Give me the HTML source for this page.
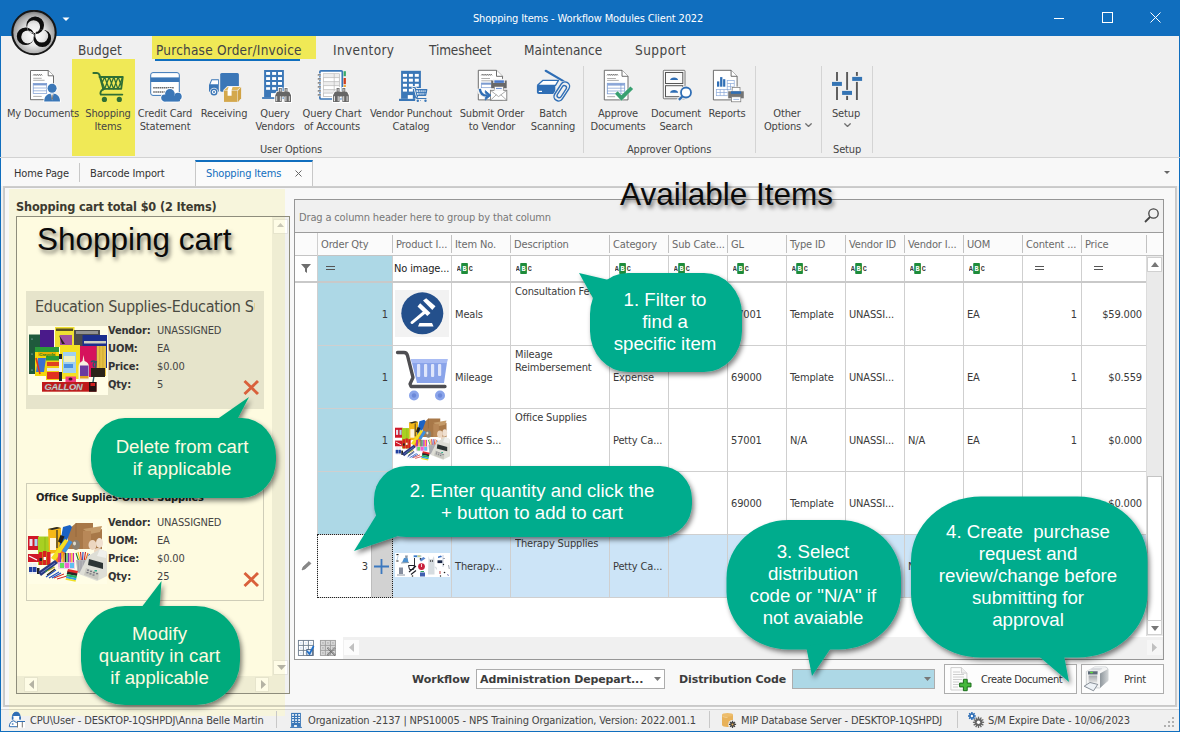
<!DOCTYPE html>
<html lang="en">
<head>
<meta charset="utf-8">
<title>Shopping Items - Workflow Modules Client 2022</title>
<style>
*{box-sizing:border-box;margin:0;padding:0}
html,body{width:1180px;height:732px;overflow:hidden;background:#f0f0f0}
body{font-family:"DejaVu Sans Condensed","Liberation Sans",sans-serif;font-size:11px;color:#444;position:relative;letter-spacing:-0.15px}
.abs{position:absolute}
#win{position:absolute;left:0;top:0;width:1180px;height:732px;background:#f0f0f0;overflow:hidden}
.wb{position:absolute;background:#106ebe}
#titlebar{position:absolute;left:0;top:0;width:1180px;height:36px;background:#106ebe}
#title{position:absolute;left:0;top:12px;width:1176px;text-align:center;color:#fff;font-size:11px}
.rt{position:absolute;top:42px;font-size:13.500px;color:#444;white-space:nowrap;letter-spacing:0}
.ri{position:absolute;top:107px;font-size:11px;line-height:13px;text-align:center;white-space:nowrap;color:#444;transform:translateX(-50%)}
.ric{position:absolute;top:69px;width:34px;height:34px;transform:translateX(-50%)}
.rg{position:absolute;top:143px;font-size:11px;color:#444;white-space:nowrap}
.rsep{position:absolute;top:66px;width:1px;height:87px;background:#d4d4d4}
#ribbonline{position:absolute;left:0;top:157px;width:1180px;height:1px;background:#d2d2d2}
#tabstrip{position:absolute;left:1px;top:158px;width:1178px;height:28px;background:#f8f8f8}
.dt{position:absolute;top:167px;font-size:11px;color:#333;white-space:nowrap}

.tb{font-family:"DejaVu Sans Condensed","Liberation Sans",sans-serif;font-weight:bold}
.big{position:absolute;letter-spacing:0;font-family:"Liberation Sans",sans-serif;color:#0a0a0a;white-space:nowrap;transform-origin:0 0;text-shadow:2px 3px 4px rgba(0,0,0,.55)}
.card{position:absolute;left:26px;width:238px}
.cl{position:absolute;left:108px;font-size:11px;color:#333;white-space:nowrap}
.cv{position:absolute;left:157px;font-size:11px;color:#444;white-space:nowrap}
.sbb{position:absolute;width:14px;height:15px;background:#fefce6;border:1px solid #e6e4cc}

#grid{position:absolute;left:294px;top:199px;width:870px;height:461px;border:1px solid #969696;background:#fff}
.vl{position:absolute;width:1px;background:#cfcfcf}
.hl{position:absolute;height:1px;background:#cfcfcf;left:295px;width:851px}
.hd{position:absolute;top:238px;color:#6a6a6a;white-space:nowrap}
.hs{position:absolute;top:235px;width:1px;height:18px;background:#c2c2c2}
.c{position:absolute;white-space:nowrap;color:#3a3a3a}
.r{text-align:right}
.abc{position:absolute;top:263px;width:16px;height:11px}
.eq{position:absolute;top:266px;width:9px;height:4px;border-top:1px solid #555;border-bottom:1px solid #555}

.vb{font-family:"DejaVu Sans","Liberation Sans",sans-serif;font-weight:bold;position:absolute;white-space:nowrap;color:#3c3c3c;font-size:11px;letter-spacing:0}
.btn{position:absolute;top:664px;height:30px;background:#fdfdfd;border:1px solid #adadad}
.st{position:absolute;top:714px;white-space:nowrap;color:#444}
.ss{position:absolute;top:711px;width:1px;height:17px;background:#c8c8c8}

.ct{position:absolute;font-family:"Liberation Sans",sans-serif;font-size:18.670px;line-height:22px;color:#fff;text-align:center;white-space:nowrap;letter-spacing:0;transform:translateX(-50%)}
</style>
</head>
<body>
<div id="win">
<div id="titlebar"></div>
<div class="wb" style="left:0;top:0;width:1px;height:732px"></div><div class="wb" style="left:1179px;top:0;width:1px;height:732px"></div><div class="wb" style="left:0;top:731px;width:1180px;height:1px"></div>
<div id="title">Shopping Items - Workflow Modules Client 2022</div>
<!--RIBBON-->
<div class="abs" style="left:11px;top:10px;width:46px;height:46px" id="logo">
<svg width="46" height="46" viewBox="0 0 46 46">
<defs><radialGradient id="lg" cx="50%" cy="55%" r="55%"><stop offset="0" stop-color="#ffffff"/><stop offset="0.45" stop-color="#e9e9e9"/><stop offset="0.85" stop-color="#a4a4a4"/><stop offset="1" stop-color="#707070"/></radialGradient><filter id="lb"><feGaussianBlur stdDeviation=".35"/></filter></defs>
<circle cx="23" cy="22.500" r="21.700" fill="url(#lg)" stroke="#161616" stroke-width="2"/>
<path d="M15.4 15.3a8.8 8.8 0 1 0 17.6 0a8.8 8.8 0 1 0 -17.6 0zM16.1 16.7a6.5 6.5 0 1 0 13.0 0a6.5 6.5 0 1 0 -13.0 0zM22.5 28.2a8.8 8.8 0 1 0 17.6 0a8.8 8.8 0 1 0 -17.6 0zM24.2 26.1a6.5 6.5 0 1 0 13.0 0a6.5 6.5 0 1 0 -13.0 0zM5.8 26.3a8.8 8.8 0 1 0 17.6 0a8.8 8.8 0 1 0 -17.6 0zM10.2 26.9a6.5 6.5 0 1 0 13.0 0a6.5 6.5 0 1 0 -13.0 0z" fill="#080808" fill-rule="evenodd" filter="url(#lb)"/>
</svg></div>
<svg class="abs" style="left:62px;top:17px" width="8" height="5" viewBox="0 0 8 5"><path d="M0.5 0.5h7L4 4z" fill="#fff"/></svg>
<svg class="abs" style="left:1054px;top:12px" width="110" height="12" viewBox="0 0 110 12" fill="none" stroke="#fff" stroke-width="1"><path d="M0 6.5h10"/><rect x="48.500" y="0.500" width="10" height="10"/><path d="M96.500 0.500l10 10M106.500 0.500l-10 10"/></svg>
<div class="abs" style="left:152px;top:36px;width:164px;height:23px;background:#f0e956"></div>
<div class="abs" style="left:72px;top:59px;width:63px;height:97px;background:#f0e956"></div>
<div class="abs" style="left:155px;top:59px;width:145px;height:2px;background:#106ebe"></div>
<div class="rt" style="left:78px">Budget</div>
<div class="rt" style="left:156px;letter-spacing:.22px">Purchase Order/Invoice</div>
<div class="rt" style="left:333px;letter-spacing:.38px">Inventory</div>
<div class="rt" style="left:429px;letter-spacing:-.12px">Timesheet</div>
<div class="rt" style="left:524px">Maintenance</div>
<div class="rt" style="left:635px;letter-spacing:.45px">Support</div>
<div class="ri" style="left:43px">My Documents</div>
<div class="ri" style="left:108px">Shopping<br>Items</div>
<div class="ri" style="left:165px">Credit Card<br>Statement</div>
<div class="ri" style="left:224px">Receiving</div>
<div class="ri" style="left:275px">Query<br>Vendors</div>
<div class="ri" style="left:332px">Query Chart<br>of Accounts</div>
<div class="ri" style="left:411px">Vendor Punchout<br>Catalog</div>
<div class="ri" style="left:492px">Submit Order<br>to Vendor</div>
<div class="ri" style="left:553px">Batch<br>Scanning</div>
<div class="ri" style="left:618px">Approve<br>Documents</div>
<div class="ri" style="left:676px">Document<br>Search</div>
<div class="ri" style="left:727px">Reports</div>
<div class="ri" style="left:787px">Other<br>Options&nbsp;&nbsp;&nbsp;</div>
<div class="ri" style="left:846px">Setup</div>
<div class="rg" style="left:260px">User Options</div>
<div class="rg" style="left:627px">Approver Options</div>
<div class="rg" style="left:833px">Setup</div>
<div class="rsep" style="left:583px"></div>
<div class="rsep" style="left:755px"></div>
<div class="rsep" style="left:821px"></div>
<div class="rsep" style="left:872px"></div>
<div id="ribbonline"></div>
<!--ICONS-->
<svg class="abs" style="left:28px;top:68px" width="36" height="36" viewBox="28 68 36 36"><path d="M30.5 70.5H48.2L53.5 75.8V99.7H30.5z" fill="#fff" stroke="#5e5e5e" stroke-width=".9" stroke-linejoin="round"/><path d="M48.2 70.5V75.8H53.5" fill="#fff" stroke="#5e5e5e" stroke-width=".9" stroke-linejoin="round"/><path d="M33.2 75.5l.9-1.200 .9 1.200l.9-1.200 .9 1.200l.9-1.200 .9 1.200l.9-1.200 .9 1.200l.9-1.200 .9 1.200" fill="none" stroke="#444" stroke-width=".7"/><path d="M33.200 78.300h8.500M33.200 80.300h11.400M33.200 96.400h8.500" stroke="#9a9a9a" stroke-width=".8"/><rect x="33.200" y="83.400" width="13.500" height="10.200" fill="#fff" stroke="#7a9ad0" stroke-width=".7"/><rect x="33.200" y="83.400" width="13.500" height="2" fill="#7a9ad0"/><path d="M33.200 88h13.500M33.200 90.800h13.500" stroke="#7a9ad0" stroke-width=".7"/><circle cx="52.100" cy="88.300" r="5.400" fill="#fff"/><path d="M43.300 102.300c0-5.500 3-9 8.800-9s8.800 3.500 8.800 9z" fill="#fff"/><circle cx="52.100" cy="88.300" r="4.500" fill="#3b77b7"/><path d="M44.200 101.600c0-4.800 2.600-8 7.900-8s7.900 3.200 7.900 8z" fill="#3b77b7"/><path d="M50.600 93.600l1.500 7 1.500-7z" fill="#fff"/><path d="M51.600 94.500h1l.4 4-.9 1.800-.9-1.800z" fill="#777"/></svg>
<svg class="abs" style="left:91px;top:70px" width="36" height="34" viewBox="91 70 36 34"><g fill="none" stroke="#2f6f35" stroke-linecap="round" stroke-linejoin="round"><path d="M93.400 72.900h3.600c1.300 0 2 .6 2.400 1.900l4 14.400" stroke-width="2"/><path d="M99.500 77h23.300l-1.600 11.900h-18.300" stroke-width="1.800"/><path d="M103.400 89.300c-2.600 1-3.600 3.200-2.600 5.300h21.500" stroke-width="1.900"/><path d="M100.300 77l4.500 11.900M104.600 77l4.600 11.900M109.200 77l4.400 11.900M113.800 77l4 11.900M118.200 77l3 8.500M104.600 77l-2.800 6.500M109.200 77l-4.600 11.900M113.800 77l-4.600 11.900M118.200 77l-4.600 11.900M122.300 78l-4.300 10.900" stroke-width="1.250"/></g><circle cx="104.400" cy="99.400" r="2.600" fill="#2f6f35"/><circle cx="119.300" cy="99.400" r="2.600" fill="#2f6f35"/></svg>
<svg class="abs" style="left:148px;top:70px" width="36" height="34" viewBox="148 70 36 34"><rect x="150.700" y="72.600" width="28.600" height="22.800" rx="2.300" fill="#fff" stroke="#3b77b7" stroke-width="1"/><rect x="150.700" y="77.400" width="28.600" height="4.600" fill="#3b77b7"/><path d="M153.200 87.800h20.700M153.200 92h12.800" stroke="#6a6a6a" stroke-width="1.500" stroke-dasharray="1.600 .5"/><g stroke="#fff" stroke-width="1.800" fill="#fff"><circle cx="169.900" cy="93.800" r="4.800"/><circle cx="177.900" cy="96.600" r="3.800"/><circle cx="164.600" cy="97.800" r="3.400"/><rect x="164.600" y="96" width="13.300" height="5.500"/></g><g fill="#3b77b7"><circle cx="169.900" cy="93.800" r="4.800"/><circle cx="177.900" cy="96.600" r="3.800"/><circle cx="164.600" cy="97.800" r="3.400"/><rect x="164.600" y="96" width="13.300" height="5.200"/><rect x="163" y="99" width="17" height="2.500" rx="1.200"/></g></svg>
<svg class="abs" style="left:207px;top:70px" width="36" height="34" viewBox="207 70 36 34"><rect x="220.200" y="72.900" width="18.700" height="18.900" rx="1.500" fill="#3b77b7"/><path d="M211.400 79.200h7.400v12.600h-9.800v-6.800z" fill="#3b77b7"/><path d="M212 80.300h6v4h-7.600z" fill="#fff"/><circle cx="214" cy="92" r="4.300" fill="#f0f0f0"/><circle cx="214" cy="92" r="3.500" fill="#3b77b7"/><circle cx="214" cy="92" r="2.100" fill="#fff"/><circle cx="214" cy="92" r="1" fill="#3b77b7"/><path d="M223.300 90l4-4h14.400v11.800l-4 4.700h-14.400z" fill="#f0f0f0"/><path d="M224 90.500h13.500v11.400H224z" fill="#d4a84c"/><path d="M224.300 90l3.500-3.100h13l-3.500 3.100z" fill="#deb659"/><path d="M238 90.500l3.100-3.200v11l-3.100 3.600z" fill="#d0a244"/><path d="M228.600 86.900h4l-1 3.100v5.800h-4v-5.800z" fill="#fff"/></svg>
<svg class="abs" style="left:260px;top:68px" width="34" height="36" viewBox="260 68 34 36"><rect x="264.1" y="70" width="19.799999999999955" height="27.099999999999994" fill="#3b77b7"/><rect x="262.1" y="97.1" width="23.899999999999977" height="1.8000000000000114" fill="#3b77b7"/><rect x="266.1" y="72" width="4.0" height="2.9" fill="#fff"/><rect x="266.1" y="77.1" width="4.0" height="2.9" fill="#fff"/><rect x="266.1" y="82" width="4.0" height="2.9" fill="#fff"/><rect x="266.1" y="87.2" width="4.0" height="2.6" fill="#fff"/><rect x="272.1" y="72" width="4.0" height="2.9" fill="#fff"/><rect x="272.1" y="77.1" width="4.0" height="2.9" fill="#fff"/><rect x="272.1" y="82" width="4.0" height="2.9" fill="#fff"/><rect x="272.1" y="87.2" width="4.0" height="2.6" fill="#fff"/><rect x="278" y="72" width="4" height="2.9" fill="#fff"/><rect x="278" y="77.1" width="4" height="2.9" fill="#fff"/><rect x="278" y="82" width="4" height="2.9" fill="#fff"/><rect x="278" y="87.2" width="4" height="2.6" fill="#fff"/><rect x="271" y="93.1" width="4.9" height="4" fill="#fff"/><g transform="translate(275.300 87.800)"><path d="M3.300 0h3.300v3.800h2.500V0h3.300v3.800h1.600l2 3.500v7.100h-6.900V8.800H6.600v5.600H-.3V7.300l2-3.500h1.600z" fill="#fff" stroke="#fff" stroke-width="1.400" stroke-linejoin="round"/><path d="M3.500.3h2.900v3.700h2.900V.3h2.900v3.700h1.700l1.800 3.400v6.700H9.300V8.600H6.400v5.500H0V7.400l1.800-3.400h1.700z" fill="#666"/><path d="M5 .9v2.800M10.800 .9v2.800M5.100 8.400v5M14 8.400v5M1.400 8.400v5M10.600 8.400v5" stroke="#fff" stroke-width=".8"/></g></svg>
<svg class="abs" style="left:315px;top:68px" width="36" height="36" viewBox="315 68 36 36"><rect x="319.900" y="70.800" width="22.400" height="28.200" rx="1" fill="#fff" stroke="#3b77b7" stroke-width="1.700"/><rect x="323.300" y="73.800" width="16" height="22.800" fill="#fff" stroke="#b0b0b0" stroke-width=".7"/><rect x="323.600" y="74" width="15.400" height="3.600" fill="#ededed"/><rect x="323.600" y="81.600" width="15.400" height="4" fill="#ededed"/><rect x="323.600" y="89.600" width="15.400" height="3.500" fill="#ededed"/><path d="M323.300 77.600h16M323.300 81.600h16M323.300 85.600h16M323.300 89.600h16M323.300 93.100h16M334.200 73.800v19.300" stroke="#b8b8b8" stroke-width=".7"/><rect x="317" y="73.60000000000001" width="5" height="2.600" rx="1.300" fill="#fff"/><rect x="317.500" y="74.0" width="3.600" height="1.800" rx=".9" fill="#8a8a8a"/><rect x="317" y="77.60000000000001" width="5" height="2.600" rx="1.300" fill="#fff"/><rect x="317.500" y="78.0" width="3.600" height="1.800" rx=".9" fill="#8a8a8a"/><rect x="317" y="81.60000000000001" width="5" height="2.600" rx="1.300" fill="#fff"/><rect x="317.500" y="82.0" width="3.600" height="1.800" rx=".9" fill="#8a8a8a"/><rect x="317" y="85.60000000000001" width="5" height="2.600" rx="1.300" fill="#fff"/><rect x="317.500" y="86.0" width="3.600" height="1.800" rx=".9" fill="#8a8a8a"/><rect x="317" y="89.60000000000001" width="5" height="2.600" rx="1.300" fill="#fff"/><rect x="317.500" y="90.0" width="3.600" height="1.800" rx=".9" fill="#8a8a8a"/><rect x="317" y="93.60000000000001" width="5" height="2.600" rx="1.300" fill="#fff"/><rect x="317.500" y="94.0" width="3.600" height="1.800" rx=".9" fill="#8a8a8a"/><rect x="343.600" y="71.200" width="2.300" height="5" fill="#3aaa6a"/><rect x="343.600" y="78" width="2.300" height="6.200" fill="#d04020"/><rect x="343.600" y="85.100" width="2.300" height="1.900" fill="#f0a830"/><g transform="translate(333.100 87.800)"><path d="M3.300 0h3.300v3.800h2.500V0h3.300v3.800h1.600l2 3.500v7.100h-6.900V8.800H6.600v5.600H-.3V7.300l2-3.500h1.600z" fill="#fff" stroke="#fff" stroke-width="1.400" stroke-linejoin="round"/><path d="M3.500.3h2.900v3.700h2.900V.3h2.900v3.700h1.700l1.800 3.400v6.700H9.300V8.600H6.400v5.500H0V7.400l1.800-3.400h1.700z" fill="#666"/><path d="M5 .9v2.800M10.800 .9v2.800M5.100 8.400v5M14 8.400v5M1.400 8.400v5M10.600 8.400v5" stroke="#fff" stroke-width=".8"/></g></svg>
<svg class="abs" style="left:397px;top:68px" width="34" height="36" viewBox="397 68 34 36"><rect x="401.1" y="70.8" width="19.799999999999955" height="28.0" fill="#3b77b7"/><rect x="399" y="98.8" width="22" height="2.200000000000003" fill="#3b77b7"/><rect x="402.9" y="73.9" width="4.1" height="2.9" fill="#fff"/><rect x="402.9" y="78.7" width="4.1" height="3.0" fill="#fff"/><rect x="402.9" y="83.8" width="4.1" height="2.9" fill="#fff"/><rect x="402.9" y="88.8" width="4.1" height="2.8" fill="#fff"/><rect x="408.9" y="73.9" width="4.0" height="2.9" fill="#fff"/><rect x="408.9" y="78.7" width="4.0" height="3.0" fill="#fff"/><rect x="408.9" y="83.8" width="4.0" height="2.9" fill="#fff"/><rect x="408.9" y="88.8" width="4.0" height="2.8" fill="#fff"/><rect x="414.8" y="73.9" width="4.0" height="2.9" fill="#fff"/><rect x="414.8" y="78.7" width="4.0" height="3.0" fill="#fff"/><rect x="414.8" y="83.8" width="4.0" height="2.9" fill="#fff"/><rect x="414.8" y="88.8" width="4.0" height="2.8" fill="#fff"/><rect x="407.8" y="95.1" width="5" height="3.7" fill="#fff"/><g fill="none" stroke="#f0f0f0" stroke-width="3" stroke-linejoin="round" stroke-linecap="round"><path d="M413 87.500h2l2.500 9h8.500"/><path d="M416 89.500h11l-1.300 6h-8.200z" fill="#f0f0f0"/><circle cx="417.800" cy="100.600" r="1.200"/><circle cx="425.500" cy="100.600" r="1.200"/><path d="M417 98.500h9"/></g><g fill="none" stroke="#3b77b7" stroke-linejoin="round" stroke-linecap="round"><path d="M413 87.500h2l2.500 9.500c-1 .3-1.300 1.300-.5 1.500h9" stroke-width="1.200"/><path d="M416.200 89.600h10.600l-1.200 5.800h-8" stroke-width="1.200" fill="#dfe9f5"/><path d="M418.500 89.600l.8 5.800M420.700 89.600l.5 5.800M422.900 89.600l.1 5.800M425 89.600l-.4 5.800M416.800 92.500h9.400" stroke-width=".9"/></g><circle cx="417.800" cy="100.700" r="1.200" fill="#3b77b7"/><circle cx="425.500" cy="100.700" r="1.200" fill="#3b77b7"/></svg>
<svg class="abs" style="left:476px;top:68px" width="34" height="36" viewBox="476 68 34 36"><path d="M478.3 70.3H496.5L502.5 76.3V99.9H478.3z" fill="#fff" stroke="#5e5e5e" stroke-width=".9" stroke-linejoin="round"/><path d="M496.5 70.3V76.3H502.5" fill="#fff" stroke="#5e5e5e" stroke-width=".9" stroke-linejoin="round"/><path d="M481.3 75.4l.9-1.200 .9 1.200l.9-1.200 .9 1.200l.9-1.200 .9 1.200l.9-1.200 .9 1.200l.9-1.200 .9 1.200l.9-1.200 .9 1.200" fill="none" stroke="#444" stroke-width=".7"/><path d="M481.300 78.500h8.700M481.300 80.800h10.700" stroke="#9a9a9a" stroke-width=".8"/><rect x="481.300" y="83" width="10" height="4.700" fill="#fff" stroke="#7a9ad0" stroke-width=".7"/><rect x="481.300" y="83" width="10" height="1.700" fill="#7a9ad0"/><rect x="490.400" y="79" width="17.200" height="22.400" fill="#f0f0f0" opacity=".0"/><rect x="493.300" y="79.200" width="11.600" height="4.500" fill="#fff" stroke="#f0f0f0" stroke-width=".8"/><rect x="494.300" y="80.300" width="9.600" height="2.600" fill="#4a78c8"/><path d="M491.200 80.500h2.100v2.500h11.400v-2.500h2v7.800h-15.500z" fill="#686868"/><rect x="494.300" y="86.500" width="9" height="4.400" fill="#fff" stroke="#777" stroke-width=".7"/><path d="M496 88.400h5.800" stroke="#4a78c8" stroke-width=".9"/><rect x="490.400" y="90.300" width="16.400" height="10" fill="#fff" stroke="#7a7a7a" stroke-width=".9"/><path d="M490.400 90.300l8.200 6.300 8.200-6.300M490.400 100.300l6-5.600M506.800 100.300l-6-5.600" fill="none" stroke="#8a8a8a" stroke-width=".7"/><rect x="494.300" y="89.400" width="9" height="1.500" fill="#fff"/><path d="M478.600 88.600c.5 5 4 7.600 8.600 7.300" fill="none" stroke="#f0f0f0" stroke-width="4"/><path d="M479.800 88.800c.6 4.600 3.600 7 7.600 6.800" fill="none" stroke="#2f6eb5" stroke-width="2.400"/><path d="M485.300 90.600l5.600 4.700-5.600 4.800v-2.600l2.600-2.200-2.600-2.200z" fill="#2f6eb5" stroke="#2f6eb5" stroke-width=".8" stroke-linejoin="round"/></svg>
<svg class="abs" style="left:534px;top:68px" width="38" height="36" viewBox="534 68 38 36"><path d="M545.700 70.800l19 11.100" stroke="#2f6eb5" stroke-width="2.200" stroke-linecap="round"/><path d="M543 80.300h15.500l-3 5h-18z" fill="#fff" stroke="#2f6eb5" stroke-width="1.300" stroke-linejoin="round"/><path d="M536.900 86.100h18.400v6c0 1.200-.8 2-2 2h-14.400c-1.200 0-2-.8-2-2z" fill="#2f6eb5"/><rect x="538.800" y="90.800" width="3.200" height="1.200" fill="#fff"/><g transform="rotate(33 561.800 91.400)"><path d="M558.600 84.500v10.500a3.300 3.300 0 0 0 6.600 0V85a4.300 4.300 0 0 0-8.600 0v11.500a5.300 5.300 0 0 0 0 0" fill="none"/><rect x="557.300" y="80.900" width="9" height="21" rx="4.500" fill="#f0f0f0" stroke="#f0f0f0" stroke-width="2.600"/><rect x="557.300" y="80.900" width="9" height="21" rx="4.500" fill="none" stroke="#2f6eb5" stroke-width="1.450"/><rect x="559.700" y="84.800" width="4.400" height="13.600" rx="2.200" fill="none" stroke="#2f6eb5" stroke-width="1.350"/></g></svg>
<svg class="abs" style="left:602px;top:68px" width="34" height="36" viewBox="602 68 34 36"><path d="M604.3 70.3H622L628 76.3V99.9H604.3z" fill="#fff" stroke="#5e5e5e" stroke-width=".9" stroke-linejoin="round"/><path d="M622 70.3V76.3H628" fill="#fff" stroke="#5e5e5e" stroke-width=".9" stroke-linejoin="round"/><path d="M607.1 75.4l.9-1.200 .9 1.200l.9-1.200 .9 1.200l.9-1.200 .9 1.200l.9-1.200 .9 1.200l.9-1.200 .9 1.200l.9-1.200 .9 1.200" fill="none" stroke="#444" stroke-width=".7"/><path d="M607.100 78.500h8.800M607.100 80.400h11.700M607.100 96.700h8" stroke="#9a9a9a" stroke-width=".8"/><rect x="607.300" y="83.300" width="17.400" height="10.500" fill="#fff" stroke="#7a9ad0" stroke-width=".8"/><rect x="607.300" y="83.300" width="17.400" height="2.300" fill="#8aa6d8"/><path d="M607.300 88.200h17.400M607.300 91h17.400M620.900 83.300v10.500" stroke="#7a9ad0" stroke-width=".7"/><path d="M615 93.800l2.700-2.500 3.700 4 9-8.700 2.700 2.500-11.700 11.700z" fill="#38a070" stroke="#f0f0f0" stroke-width=".8" paint-order="stroke"/></svg>
<svg class="abs" style="left:661px;top:68px" width="34" height="36" viewBox="661 68 34 36"><rect x="663.300" y="70.300" width="21.700" height="28.500" rx=".8" fill="#f7f7f7" stroke="#6a6a6a" stroke-width=".9"/><rect x="665.500" y="72.500" width="17.300" height="11" fill="#fafafa" stroke="#555" stroke-width="1"/><rect x="665.500" y="85.700" width="17.300" height="11" fill="#fafafa" stroke="#555" stroke-width="1"/><path d="M670.100 80c.3-1.800 1.600-2.600 4-2.600s3.700.8 4 2.600z" fill="#2f6eb5"/><path d="M670.100 92.700c.3-1.800 1.600-2.600 4-2.600s3.700.8 4 2.600z" fill="#2f6eb5"/><circle cx="686" cy="92.500" r="6.700" fill="#f0f0f0"/><path d="M682 96.800l-3.200 3.200" stroke="#f0f0f0" stroke-width="4.400" stroke-linecap="round"/><circle cx="686" cy="92.500" r="5" fill="#fff" stroke="#2f6eb5" stroke-width="1.800"/><path d="M682.200 96.600l-3.300 3.300" stroke="#2f6eb5" stroke-width="2.300"/></svg>
<svg class="abs" style="left:711px;top:68px" width="36" height="36" viewBox="711 68 36 36"><path d="M713.4 70.3H731.1L737.1 76.3V99.9H713.4z" fill="#fff" stroke="#5e5e5e" stroke-width=".9" stroke-linejoin="round"/><path d="M731.1 70.3V76.3H737.1" fill="#fff" stroke="#5e5e5e" stroke-width=".9" stroke-linejoin="round"/><rect x="717" y="81.400" width="2.300" height="5.300" fill="#2f6eb5"/><rect x="720.100" y="77.100" width="2.300" height="9.600" fill="#2f6eb5"/><rect x="723.100" y="79.200" width="2.200" height="7.500" fill="#2f6eb5"/><g fill="none" stroke="#8aa8d8" stroke-width=".7"><rect x="727.200" y="80.400" width="7" height="9.300"/><path d="M727.200 83.500h7M727.200 86.600h7M730.500 83.500v6.200"/><rect x="716.300" y="89.400" width="11.600" height="6.300"/><path d="M716.300 92.500h11.600M720.200 89.400v6.300M724 89.400v6.300"/></g><rect x="727.400" y="86.400" width="17.200" height="16.200" fill="#f0f0f0" opacity="0"/><rect x="731.300" y="86.600" width="9.500" height="6" fill="#f0f0f0"/><rect x="732.200" y="87.400" width="7.800" height="4.500" fill="#fff" stroke="#777" stroke-width=".7"/><rect x="727.600" y="90.600" width="16.800" height="8.400" fill="#f0f0f0"/><path d="M728.200 91.300h15.600v7h-15.600z" fill="#757575"/><rect x="731" y="91.300" width="10.100" height="2.500" fill="#2f6eb5"/><rect x="731.500" y="96.800" width="9.300" height="5" fill="#fff" stroke="#777" stroke-width=".7"/><path d="M733.300 99.400h5.800" stroke="#8aa8d8" stroke-width=".8"/></svg>
<svg class="abs" style="left:830px;top:70px" width="34" height="32" viewBox="830 70 34 32"><path d="M837 72.100v27.800M847.100 72.100v27.800M856.900 72.100v27.800" stroke="#595959" stroke-width="1.900"/><g fill="#f0f0f0"><rect x="832" y="80.900" width="9.900" height="6"/><rect x="842.100" y="89.900" width="9.900" height="6"/><rect x="852.200" y="75.900" width="9.900" height="6"/></g><g fill="#3474b4"><rect x="832" y="81.900" width="9.900" height="4"/><rect x="842.100" y="90.900" width="9.900" height="4"/><rect x="852.200" y="76.900" width="9.900" height="4"/></g></svg>
<svg class="abs" style="left:805px;top:123px" width="7" height="4" viewBox="0 0 7 4"><path d="M.4.400l3.100 3.100L6.600.4" fill="none" stroke="#707070" stroke-width="1.300"/></svg>
<svg class="abs" style="left:843.500px;top:123px" width="7" height="4" viewBox="0 0 7 4"><path d="M.4.400l3.100 3.100L6.600.4" fill="none" stroke="#707070" stroke-width="1.300"/></svg>
<!--TABSTRIP-->
<div id="tabstrip"></div>

<div class="abs" style="left:195px;top:160px;width:118px;height:28px;background:#fbfbfb;border:1px solid #c8c8c8;border-bottom:none;border-top:2px solid #106ebe"></div>
<div class="abs" style="left:79px;top:163px;width:1px;height:19px;background:#c8c8c8"></div>
<div class="dt" style="left:14px">Home Page</div>
<div class="dt" style="left:90px">Barcode Import</div>
<div class="dt" style="left:206px;color:#106ebe">Shopping Items</div>
<svg class="abs" style="left:295px;top:170px" width="7" height="7" viewBox="0 0 7 7"><path d="M0.500 0.500l6 6M6.500 0.500l-6 6" stroke="#666" stroke-width="1" fill="none"/></svg>
<svg class="abs" style="left:1164px;top:171px" width="6" height="3" viewBox="0 0 6 3"><path d="M0 0h6L3 3z" fill="#666"/></svg>
<!--LEFT-->
<div class="abs" style="left:3px;top:186px;width:1174px;height:521px;border:1px solid #cdcdcd"></div>
<div class="abs" style="left:4px;top:187px;width:1172px;height:519px;border:1px solid #c9c9c9;background:#f8f8f8"></div>
<div class="abs" style="left:9px;top:189px;width:276px;height:527px;background:#f7f5dc" id="hl"></div>
<div class="abs tb" style="left:16px;top:199px;font-size:12.600px;color:#3c3a30;white-space:nowrap">Shopping cart total $0 (2 Items)</div>
<div class="abs" style="left:16px;top:216px;width:274px;height:478px;border:1px solid #8e8d7c;background:#fefbe0"></div>
<div class="abs" style="left:272px;top:217px;width:13px;height:459px;background:#efedd3"></div>
<div class="abs" style="left:285px;top:217px;width:4px;height:476px;background:#f0f0f0"></div>
<div class="abs" style="left:17px;top:676px;width:268px;height:17px;background:#efedd3"></div>
<div class="sbb" style="left:273px;top:219px;border-right:none;width:12px"></div><div class="sbb" style="left:273px;top:660px;border-right:none;width:12px"></div><div class="abs" style="left:285px;top:219px;width:3px;height:15px;background:#fff;border:1px solid #e4e4e4;border-left:none"></div><div class="abs" style="left:285px;top:660px;width:3px;height:15px;background:#fff;border:1px solid #e4e4e4;border-left:none"></div>
<div class="sbb" style="left:24px;top:677px"></div><div class="sbb" style="left:255px;top:677px"></div>
<svg class="abs" style="left:277px;top:223px" width="7" height="4" viewBox="0 0 9 5"><path d="M0 5L4.500 0 9 5z" fill="#c9c7b6"/></svg>
<svg class="abs" style="left:277px;top:665px" width="9" height="5" viewBox="0 0 9 5"><path d="M0 0L4.500 5 9 0z" fill="#b5b3a4"/></svg>
<svg class="abs" style="left:29px;top:680px" width="5" height="9" viewBox="0 0 5 9"><path d="M5 0L0 4.500 5 9z" fill="#b5b3a4"/></svg>
<svg class="abs" style="left:261px;top:680px" width="5" height="9" viewBox="0 0 5 9"><path d="M0 0L5 4.500 0 9z" fill="#b5b3a4"/></svg>
<div class="big" id="bigcart" style="left:37px;top:221px;font-size:31.500px">Shopping cart</div>
<div class="card" style="top:291px;height:118px;background:#e6e4cb"></div>
<div class="abs" style="left:35px;top:297px;width:220px;height:24px;overflow:hidden;font-size:16px;color:#4a4a42;white-space:nowrap;letter-spacing:-0.3px">Education Supplies-Education Supplies</div>
<div class="cl tb" style="top:324px">Vendor:</div><div class="cv" style="top:324px">UNASSIGNED</div>
<div class="cl tb" style="top:342px">UOM:</div><div class="cv" style="top:342px">EA</div>
<div class="cl tb" style="top:360px">Price:</div><div class="cv" style="top:360px">$0.00</div>
<div class="cl tb" style="top:378px">Qty:</div><div class="cv" style="top:378px">5</div>
<svg class="abs" style="left:243px;top:379px" width="17" height="17" viewBox="0 0 17 17"><path d="M1.500 2l13.500 13M15 2L1.500 15" stroke="#d9603b" stroke-width="2.900" fill="none"/></svg>
<div class="card" style="top:483px;height:118px;border:1px solid #cfcdb8"></div>
<div class="abs tb" style="left:36px;top:491px;font-size:11px;color:#222;white-space:nowrap">Office Supplies-Office Supplies</div>
<div class="cl tb" style="top:516px">Vendor:</div><div class="cv" style="top:516px">UNASSIGNED</div>
<div class="cl tb" style="top:534px">UOM:</div><div class="cv" style="top:534px">EA</div>
<div class="cl tb" style="top:552px">Price:</div><div class="cv" style="top:552px">$0.00</div>
<div class="cl tb" style="top:570px">Qty:</div><div class="cv" style="top:570px">25</div>
<svg class="abs" style="left:243px;top:571px" width="17" height="17" viewBox="0 0 17 17"><path d="M1.500 2l13.500 13M15 2L1.500 15" stroke="#d9603b" stroke-width="2.900" fill="none"/></svg>
<!--GRID-->
<div id="grid"></div>
<div class="abs" style="left:295px;top:200px;width:868px;height:32px;background:#f0f0f0"></div>
<div class="abs" style="left:295px;top:232px;width:868px;height:1px;background:#9c9c9c"></div>
<div class="abs" style="left:299px;top:211px;color:#787878;white-space:nowrap">Drag a column header here to group by that column</div>
<svg class="abs" style="left:1144px;top:207px" width="16" height="16" viewBox="0 0 16 16" fill="none" stroke="#444" stroke-width="1.300"><circle cx="9.500" cy="6.500" r="4.700"/><path d="M6 10L1 15" stroke-width="1.800"/></svg>
<div class="abs" style="left:295px;top:233px;width:868px;height:22px;background:#fbfbfb"></div>
<div class="abs" style="left:295px;top:255px;width:868px;height:1px;background:#c4c4c4"></div>
<div class="abs" style="left:318px;top:256px;width:74px;height:279px;background:#add8e6"></div>
<div class="abs" style="left:318px;top:535px;width:828px;height:62px;background:#cce4f7"></div>
<div class="vl" style="left:317px;top:233px;height:365px"></div>
<div class="hs" style="left:392px"></div>
<div class="vl" style="left:392px;top:256px;height:342px"></div>
<div class="hs" style="left:451px"></div>
<div class="vl" style="left:451px;top:256px;height:342px"></div>
<div class="hs" style="left:510px"></div>
<div class="vl" style="left:510px;top:256px;height:342px"></div>
<div class="hs" style="left:609px"></div>
<div class="vl" style="left:609px;top:256px;height:342px"></div>
<div class="hs" style="left:668px"></div>
<div class="vl" style="left:668px;top:256px;height:342px"></div>
<div class="hs" style="left:727px"></div>
<div class="vl" style="left:727px;top:256px;height:342px"></div>
<div class="hs" style="left:786px"></div>
<div class="vl" style="left:786px;top:256px;height:342px"></div>
<div class="hs" style="left:845px"></div>
<div class="vl" style="left:845px;top:256px;height:342px"></div>
<div class="hs" style="left:904px"></div>
<div class="vl" style="left:904px;top:256px;height:342px"></div>
<div class="hs" style="left:963px"></div>
<div class="vl" style="left:963px;top:256px;height:342px"></div>
<div class="hs" style="left:1022px"></div>
<div class="vl" style="left:1022px;top:256px;height:342px"></div>
<div class="hs" style="left:1081px"></div>
<div class="vl" style="left:1081px;top:256px;height:342px"></div>
<div class="hs" style="left:1146px"></div>
<div class="vl" style="left:1146px;top:256px;height:342px"></div>
<div class="vl" style="left:1146px;top:256px;height:380px;background:#dcdcdc"></div>
<div class="hl" style="top:281px;height:2px;background:#c9c9c9"></div>
<div class="hl" style="top:345px;left:318px;width:828px"></div>
<div class="hl" style="top:408px;left:318px;width:828px"></div>
<div class="hl" style="top:471px;left:318px;width:828px"></div>
<div class="hl" style="top:534px;left:318px;width:828px"></div>
<div class="hl" style="top:597px;left:318px;width:828px"></div>
<div class="hd" style="left:321px">Order Qty</div>
<div class="hd" style="left:396px">Product I...</div>
<div class="hd" style="left:455px">Item No.</div>
<div class="hd" style="left:514px">Description</div>
<div class="hd" style="left:613px">Category</div>
<div class="hd" style="left:672px">Sub Cate...</div>
<div class="hd" style="left:731px">GL</div>
<div class="hd" style="left:790px">Type ID</div>
<div class="hd" style="left:849px">Vendor ID</div>
<div class="hd" style="left:908px">Vendor I...</div>
<div class="hd" style="left:967px">UOM</div>
<div class="hd" style="left:1026px">Content ...</div>
<div class="hd" style="left:1085px">Price</div>
<svg class="abs" style="left:301px;top:264px" width="10" height="9" viewBox="0 0 10 9"><path d="M0 0h10L6 4.500V9L4 7.500V4.500z" fill="#6e6e6e"/></svg>
<div class="eq" style="left:326px"></div>
<div class="c" style="left:394px;top:262px;color:#222">No image...</div>
<svg class="abc" style="left:457px" viewBox="0 0 16 11"><rect x="4.200" y="0" width="6.700" height="11" rx=".8" fill="#1e8c3a"/><g font-family="Liberation Mono,monospace" font-size="6.800" font-weight="bold" letter-spacing="0"><text x="-.3" y="8" fill="#3c3c3c">A</text><text x="5.500" y="8" fill="#fff">B</text><text x="11.700" y="8" fill="#3c3c3c">C</text></g></svg>
<svg class="abc" style="left:516px" viewBox="0 0 16 11"><rect x="4.200" y="0" width="6.700" height="11" rx=".8" fill="#1e8c3a"/><g font-family="Liberation Mono,monospace" font-size="6.800" font-weight="bold" letter-spacing="0"><text x="-.3" y="8" fill="#3c3c3c">A</text><text x="5.500" y="8" fill="#fff">B</text><text x="11.700" y="8" fill="#3c3c3c">C</text></g></svg>
<svg class="abc" style="left:615px" viewBox="0 0 16 11"><rect x="4.200" y="0" width="6.700" height="11" rx=".8" fill="#1e8c3a"/><g font-family="Liberation Mono,monospace" font-size="6.800" font-weight="bold" letter-spacing="0"><text x="-.3" y="8" fill="#3c3c3c">A</text><text x="5.500" y="8" fill="#fff">B</text><text x="11.700" y="8" fill="#3c3c3c">C</text></g></svg>
<svg class="abc" style="left:674px" viewBox="0 0 16 11"><rect x="4.200" y="0" width="6.700" height="11" rx=".8" fill="#1e8c3a"/><g font-family="Liberation Mono,monospace" font-size="6.800" font-weight="bold" letter-spacing="0"><text x="-.3" y="8" fill="#3c3c3c">A</text><text x="5.500" y="8" fill="#fff">B</text><text x="11.700" y="8" fill="#3c3c3c">C</text></g></svg>
<svg class="abc" style="left:733px" viewBox="0 0 16 11"><rect x="4.200" y="0" width="6.700" height="11" rx=".8" fill="#1e8c3a"/><g font-family="Liberation Mono,monospace" font-size="6.800" font-weight="bold" letter-spacing="0"><text x="-.3" y="8" fill="#3c3c3c">A</text><text x="5.500" y="8" fill="#fff">B</text><text x="11.700" y="8" fill="#3c3c3c">C</text></g></svg>
<svg class="abc" style="left:792px" viewBox="0 0 16 11"><rect x="4.200" y="0" width="6.700" height="11" rx=".8" fill="#1e8c3a"/><g font-family="Liberation Mono,monospace" font-size="6.800" font-weight="bold" letter-spacing="0"><text x="-.3" y="8" fill="#3c3c3c">A</text><text x="5.500" y="8" fill="#fff">B</text><text x="11.700" y="8" fill="#3c3c3c">C</text></g></svg>
<svg class="abc" style="left:851px" viewBox="0 0 16 11"><rect x="4.200" y="0" width="6.700" height="11" rx=".8" fill="#1e8c3a"/><g font-family="Liberation Mono,monospace" font-size="6.800" font-weight="bold" letter-spacing="0"><text x="-.3" y="8" fill="#3c3c3c">A</text><text x="5.500" y="8" fill="#fff">B</text><text x="11.700" y="8" fill="#3c3c3c">C</text></g></svg>
<svg class="abc" style="left:910px" viewBox="0 0 16 11"><rect x="4.200" y="0" width="6.700" height="11" rx=".8" fill="#1e8c3a"/><g font-family="Liberation Mono,monospace" font-size="6.800" font-weight="bold" letter-spacing="0"><text x="-.3" y="8" fill="#3c3c3c">A</text><text x="5.500" y="8" fill="#fff">B</text><text x="11.700" y="8" fill="#3c3c3c">C</text></g></svg>
<svg class="abc" style="left:969px" viewBox="0 0 16 11"><rect x="4.200" y="0" width="6.700" height="11" rx=".8" fill="#1e8c3a"/><g font-family="Liberation Mono,monospace" font-size="6.800" font-weight="bold" letter-spacing="0"><text x="-.3" y="8" fill="#3c3c3c">A</text><text x="5.500" y="8" fill="#fff">B</text><text x="11.700" y="8" fill="#3c3c3c">C</text></g></svg>
<div class="eq" style="left:1035px"></div>
<div class="eq" style="left:1094px"></div>
<div class="c r" style="left:318px;width:70px;top:308px">1</div>
<div class="c" style="left:455px;top:308px">Meals</div>
<div class="c" style="left:515px;top:285px;line-height:13px;width:93px;overflow:hidden">Consultation Fee</div>
<div class="c" style="left:731px;top:308px">57001</div>
<div class="c" style="left:790px;top:308px">Template</div>
<div class="c" style="left:849px;top:308px">UNASSI...</div>
<div class="c" style="left:967px;top:308px">EA</div>
<div class="c r" style="left:1023px;width:54px;top:308px">1</div>
<div class="c r" style="left:1082px;width:60px;top:308px">$59.000</div>
<div class="c r" style="left:318px;width:70px;top:371px">1</div>
<div class="c" style="left:455px;top:371px">Mileage</div>
<div class="c" style="left:515px;top:348px;line-height:13px;width:93px;overflow:hidden">Mileage<br>Reimbersement</div>
<div class="c" style="left:613px;top:371px">Expense</div>
<div class="c" style="left:731px;top:371px">69000</div>
<div class="c" style="left:790px;top:371px">Template</div>
<div class="c" style="left:849px;top:371px">UNASSI...</div>
<div class="c" style="left:967px;top:371px">EA</div>
<div class="c r" style="left:1023px;width:54px;top:371px">1</div>
<div class="c r" style="left:1082px;width:60px;top:371px">$0.559</div>
<div class="c r" style="left:318px;width:70px;top:434px">1</div>
<div class="c" style="left:455px;top:434px">Office S...</div>
<div class="c" style="left:515px;top:411px;line-height:13px;width:93px;overflow:hidden">Office Supplies</div>
<div class="c" style="left:613px;top:434px">Petty Ca...</div>
<div class="c" style="left:731px;top:434px">57001</div>
<div class="c" style="left:790px;top:434px">N/A</div>
<div class="c" style="left:849px;top:434px">UNASSI...</div>
<div class="c" style="left:908px;top:434px">N/A</div>
<div class="c" style="left:967px;top:434px">EA</div>
<div class="c r" style="left:1023px;width:54px;top:434px">1</div>
<div class="c r" style="left:1082px;width:60px;top:434px">$0.000</div>
<div class="c r" style="left:318px;width:70px;top:497px">1</div>
<div class="c" style="left:455px;top:497px">Educati...</div>
<div class="c" style="left:515px;top:474px;line-height:13px;width:93px;overflow:hidden">Education Supplies</div>
<div class="c" style="left:613px;top:497px">Petty Ca...</div>
<div class="c" style="left:731px;top:497px">69000</div>
<div class="c" style="left:790px;top:497px">Template</div>
<div class="c" style="left:849px;top:497px">UNASSI...</div>
<div class="c" style="left:967px;top:497px">EA</div>
<div class="c r" style="left:1023px;width:54px;top:497px">1</div>
<div class="c r" style="left:1082px;width:60px;top:497px">$0.000</div>
<div class="c" style="left:455px;top:560px">Therapy...</div>
<div class="c" style="left:515px;top:537px;line-height:13px;width:93px;overflow:hidden">Therapy Supplies</div>
<div class="c" style="left:613px;top:560px">Petty Ca...</div>
<div class="c" style="left:731px;top:560px">57001</div>
<div class="c" style="left:790px;top:560px">N/A</div>
<div class="c" style="left:849px;top:560px">UNASSI...</div>
<div class="c" style="left:908px;top:560px">N/A</div>
<div class="c" style="left:967px;top:560px">EA</div>
<div class="c r" style="left:1023px;width:54px;top:560px">1</div>
<div class="c r" style="left:1082px;width:60px;top:560px">$0.000</div>
<div class="abs" style="left:318px;top:535px;width:53px;height:62px;background:#fff"></div>
<div class="abs" style="left:371px;top:535px;width:21px;height:62px;background:#d2d2d2;border-left:1px solid #bdbdbd"></div>
<div class="abs" style="left:317px;top:534px;width:76px;height:64px;border:1px dotted #222"></div>
<div class="c r" style="left:318px;width:50px;top:560px">3</div>
<svg class="abs" style="left:374px;top:559px" width="15" height="15" viewBox="0 0 15 15"><path d="M7.500 0v15M0 7.500h15" stroke="#3b78bf" stroke-width="1.800"/></svg>
<svg class="abs" style="left:301px;top:561px" width="11" height="10" viewBox="0 0 11 10"><path d="M1 9l1-3 6-5.500 2 2-6 5.500z" fill="#888" stroke="#666" stroke-width=".5"/></svg>
<div class="abs" style="left:1147px;top:256px;width:16px;height:380px;background:#eaeaea"></div>
<div class="abs" style="left:1147px;top:257px;width:15px;height:15px;background:#fff;border:1px solid #d0d0d0"></div>
<svg class="abs" style="left:1151px;top:262px" width="8" height="5" viewBox="0 0 8 5"><path d="M0 5L4 0l4 5z" fill="#777"/></svg>
<div class="abs" style="left:1147px;top:476px;width:15px;height:145px;background:#fff;border:1px solid #c4c4c4"></div>
<div class="abs" style="left:1147px;top:620px;width:15px;height:15px;background:#fff;border:1px solid #d0d0d0"></div>
<svg class="abs" style="left:1151px;top:626px" width="8" height="5" viewBox="0 0 8 5"><path d="M0 0l4 5 4-5z" fill="#777"/></svg>
<div class="abs" style="left:343px;top:637px;width:820px;height:22px;background:#f0f0f0"></div>

<div class="abs" style="left:344px;top:640px;width:15px;height:15px;background:#fcfcfc"></div>
<svg class="abs" style="left:349px;top:643px" width="5" height="9" viewBox="0 0 5 9"><path d="M5 0L0 4.500 5 9z" fill="#c0c0c0"/></svg>
<div class="abs" style="left:1147px;top:640px;width:15px;height:15px;background:#f6f6f6"></div>
<svg class="abs" style="left:1152px;top:643px" width="5" height="9" viewBox="0 0 5 9"><path d="M0 0l5 4.500L0 9z" fill="#c0c0c0"/></svg>
<!--GRIDICONS-->
<svg class="abs" style="left:297px;top:639px" width="18" height="18" viewBox="297 639 18 18"><rect x="298.400" y="640.400" width="15" height="15" fill="#fff" stroke="#6a7a8c" stroke-width=".9"/><path d="M303.400 640.400v15M308.400 640.400v15M298.400 645.400h15M298.400 650.400h15" stroke="#6a7a8c" stroke-width=".9"/><rect x="300.09999999999997" y="642.1" width="1.600" height="1.600" fill="#d4e4f8"/><rect x="300.09999999999997" y="647.1" width="1.600" height="1.600" fill="#d4e4f8"/><rect x="300.09999999999997" y="652.1" width="1.600" height="1.600" fill="#d4e4f8"/><rect x="305.09999999999997" y="642.1" width="1.600" height="1.600" fill="#d4e4f8"/><rect x="305.09999999999997" y="647.1" width="1.600" height="1.600" fill="#d4e4f8"/><rect x="305.09999999999997" y="652.1" width="1.600" height="1.600" fill="#d4e4f8"/><rect x="310.09999999999997" y="642.1" width="1.600" height="1.600" fill="#d4e4f8"/><rect x="310.09999999999997" y="647.1" width="1.600" height="1.600" fill="#d4e4f8"/><rect x="310.09999999999997" y="652.1" width="1.600" height="1.600" fill="#d4e4f8"/><rect x="306.800" y="649.500" width="5.800" height="5.800" fill="#dde6f2" stroke="#445a78" stroke-width=".8"/><path d="M307.300 651.300l2.200 2.700 3.900-7.500" fill="none" stroke="#1f6fc8" stroke-width="1.700" stroke-linecap="round" stroke-linejoin="round"/></svg>
<svg class="abs" style="left:319px;top:639px" width="18" height="18" viewBox="319 639 18 18"><rect x="320.400" y="640.400" width="15" height="15" fill="#d9d9d9" stroke="#9c9c9c" stroke-width=".9"/><path d="M325.400 640.400v15M330.400 640.400v15M320.400 645.400h15M320.400 650.400h15" stroke="#9c9c9c" stroke-width=".9"/><rect x="322.0" y="642.0" width="1.800" height="1.800" fill="#bdbdbd"/><rect x="322.0" y="647.0" width="1.800" height="1.800" fill="#bdbdbd"/><rect x="322.0" y="652.0" width="1.800" height="1.800" fill="#bdbdbd"/><rect x="327.0" y="642.0" width="1.800" height="1.800" fill="#bdbdbd"/><rect x="327.0" y="647.0" width="1.800" height="1.800" fill="#bdbdbd"/><rect x="327.0" y="652.0" width="1.800" height="1.800" fill="#bdbdbd"/><rect x="332.0" y="642.0" width="1.800" height="1.800" fill="#bdbdbd"/><rect x="332.0" y="647.0" width="1.800" height="1.800" fill="#bdbdbd"/><rect x="332.0" y="652.0" width="1.800" height="1.800" fill="#bdbdbd"/><path d="M327.500 647.800l7.500 7.500M335 647.800l-7.500 7.500" stroke="#6c6c6c" stroke-width="1.800" stroke-dasharray=".9 .5"/></svg>
<!--IMAGES-->
<svg class="abs" style="left:28px;top:325px" width="80" height="70" viewBox="28 325 80 70"><rect x="28" y="326" width="80" height="69" fill="#fffde6"/>
<rect x="29" y="334.500" width="11" height="39.500" fill="#1f5a3c"/><circle cx="32" cy="339" r=".6" fill="#cde"/><circle cx="32" cy="354" r=".6" fill="#cde"/><circle cx="32" cy="370" r=".6" fill="#cde"/>
<rect x="40" y="330" width="14" height="17" fill="#4a1a8a"/>
<rect x="55" y="327" width="19.500" height="20" fill="#efe033"/><rect x="56" y="328.500" width="17" height="2.500" fill="#5a5020"/><path d="M60 335h12v10h-12z" fill="#a050a0"/><path d="M59 335l3 9h3z" fill="#302020"/>
<rect x="74" y="330" width="26" height="17" fill="#4c4c4c"/><rect x="76" y="331" width="22" height="3" fill="#d8d8d8" opacity=".5"/>
<rect x="82.500" y="335" width="24.500" height="33" fill="#1c2f8e"/><rect x="84" y="341" width="22" height="2.500" fill="#d0d0c0"/>
<rect x="96.500" y="346" width="9.500" height="30" fill="#e6c044"/><path d="M99.700 346v30M102.900 346v30" stroke="#c09a28" stroke-width=".6"/>
<rect x="78.500" y="346" width="18" height="31" fill="#d6125c"/>
<rect x="35" y="347" width="24" height="29" fill="#f4d60a"/><rect x="35" y="347" width="24" height="5" fill="#2a9a3a"/><rect x="38" y="352" width="18" height="4" fill="#e8b000"/><path d="M38 358h8l-2 14h-8z" fill="#3a70d0"/><path d="M36 358l4 16" stroke="#e03020" stroke-width="1.500"/>
<rect x="60" y="345" width="20" height="34" fill="#f4e022"/><rect x="63" y="352" width="13" height="21" fill="#9fd0f0"/><rect x="64" y="356" width="11" height="6" fill="#f0f0c0"/><rect x="64" y="364" width="9" height="4" fill="#4a90e0"/>
<rect x="46" y="356" width="14" height="24" fill="#f0d010"/><rect x="46" y="356" width="14" height="4.500" fill="#2a9a3a"/><rect x="47" y="362" width="12" height="4" fill="#e04020"/><rect x="47" y="368" width="12" height="3" fill="#e8e8e8"/><rect x="47" y="372" width="12" height="7" fill="#e03020"/>
<rect x="59" y="354" width="3" height="27" fill="#f4f4f4"/><rect x="59" y="354" width="3" height="5" fill="#222"/><rect x="59" y="372" width="3" height="9" fill="#222"/>
<path d="M83.500 355l1 6c3 1 4.500 3 4.500 6v13h-10.500v-13c0-3 1.500-5 4-6z" fill="#f6f1e2"/><rect x="80" y="365.500" width="8.500" height="10.500" fill="#6a3aa0"/><rect x="80" y="376" width="8.500" height="2.500" fill="#e0a020"/>
<path d="M91 362c2-2 5-1 5 2l-3 18M97 362c-3-1-5 2-3 5" stroke="#2a5a6a" stroke-width="1.400" fill="none"/>
<rect x="91" y="368" width="14" height="9" fill="#2a2418"/>
<rect x="65.500" y="376.500" width="10.500" height="5.500" fill="#f04080"/><ellipse cx="70.500" cy="379" rx="2" ry="1.500" fill="#401020"/>
<rect x="42" y="382" width="54.500" height="9.700" fill="#c01a1a"/><rect x="89" y="382" width="7.500" height="9.700" fill="#281010"/><rect x="90.500" y="383" width="4.500" height="3" fill="#d02020"/>
<text x="44.500" y="390" font-family="Liberation Sans,sans-serif" font-weight="bold" font-style="italic" font-size="8.500" fill="#e4e4e4" stroke="#777" stroke-width=".3" textLength="38" lengthAdjust="spacingAndGlyphs">GALLON</text>
<text x="39" y="355.500" font-family="Liberation Sans,sans-serif" font-weight="bold" font-size="4" fill="#1a8a2a" textLength="16" lengthAdjust="spacingAndGlyphs">Crayola</text></svg>
<svg class="abs" style="left:28px;top:519px" width="79" height="65" viewBox="28 519 79 65"><rect x="28" y="519" width="79" height="65" fill="#fffde6"/>
<path d="M68 530l8-7h17v9l9-3v20H68z" fill="#a87848"/><path d="M83 529l19-3-2 6-10 2z" fill="#c49a68"/><path d="M83 531h8v18h-8z" fill="#b88858"/><path d="M76 523v14" stroke="#8a6038" stroke-width=".6"/>
<ellipse cx="92.500" cy="545" rx="4" ry="5" fill="#ecd6c0"/><ellipse cx="99.500" cy="543" rx="3.500" ry="5" fill="#f0e0d0"/><ellipse cx="98" cy="551" rx="4" ry="3" fill="#ecd6c0"/>
<ellipse cx="76" cy="545" rx="4" ry="5" fill="#8a8070"/><ellipse cx="74.500" cy="543.500" rx="1.500" ry="2" fill="#e0dccc"/>
<rect x="28" y="536" width="11" height="14" fill="#d01828"/><rect x="29.500" y="539" width="3" height="7" fill="#e8e0f0"/><rect x="34.500" y="539" width="3" height="7" fill="#a8d8f0"/>
<rect x="38" y="536.500" width="11" height="28.500" fill="#a8d022"/><path d="M45 537v28" stroke="#88b010" stroke-width=".7"/>
<path d="M48 529l9-2 4 1v24l-12 2z" fill="#f5b818"/><path d="M48 529l9-2 4 1-9 2z" fill="#282828"/><rect x="50" y="538" width="6" height="12" fill="#fff6e0"/><path d="M57 530v18" stroke="#2a2a2a" stroke-width="1.200"/>
<path d="M63 527l7-2 2 2-9 24-4-2z" fill="#1a62c4"/><path d="M60.500 535l4 1.500-3 7-3.500-2z" fill="#202020"/>
<path d="M51 558l14-19 3.500 2-13 20z" fill="#f4e020"/><path d="M55 561l13-20 3 1.500-12 21z" fill="#f47a20"/><path d="M62 551l7-11 3.500 2-7 11z" fill="#3a90e0"/>
<rect x="28" y="554" width="11" height="8" fill="#d01828"/><path d="M29 556l8 4" stroke="#fff" stroke-width="1.200"/>
<rect x="39" y="552" width="3.500" height="13" fill="#d82020"/><rect x="43" y="551" width="3.500" height="14" fill="#d82020"/><rect x="47" y="552" width="3.500" height="13" fill="#d82020"/><rect x="43.500" y="557" width="2.500" height="3" fill="#fff"/><rect x="39.500" y="558" width="2.500" height="3" fill="#222"/>
<rect x="29" y="563" width="3.500" height="11" fill="#eeeef4"/><rect x="33" y="563" width="3.500" height="11" fill="#eeeef4"/><rect x="29" y="567" width="3.500" height="5" fill="#2040a0"/><rect x="33" y="567" width="3.500" height="5" fill="#2040a0"/><rect x="37" y="568" width="2.500" height="6" fill="#222"/>
<path d="M38 572l17-12 3 3-17 13z" fill="#283880"/><path d="M41 573l14-10" stroke="#8090d0" stroke-width=".8"/>
<g stroke-width="1.300"><path d="M59 553v14" stroke="#d020a0"/><path d="M60.600 553v14" stroke="#8030c0"/><path d="M62.200 553v14" stroke="#f0c020"/><path d="M63.800 553v14" stroke="#f08020"/><path d="M65.400 553v14" stroke="#222"/><path d="M67 553v14" stroke="#30b040"/><path d="M68.600 553v14" stroke="#8030c0"/><path d="M70.200 553v14" stroke="#f040a0"/><path d="M71.800 553v14" stroke="#f0c020"/><path d="M73.400 553v14" stroke="#d020a0"/></g>
<rect x="58" y="562" width="17" height="7" fill="#e8c8f0" opacity=".8"/><rect x="60" y="563" width="4" height="5" fill="#60e060"/><rect x="65" y="563" width="4" height="5" fill="#f060d0"/><rect x="70" y="563" width="4" height="5" fill="#60c0f0"/>
<g stroke-width="1.100"><path d="M76 553l3 9" stroke="#208030"/><path d="M78 552l2.500 10" stroke="#f0c020"/><path d="M80.500 552l1 10" stroke="#d02020"/><path d="M83 552l-.5 10" stroke="#2040c0"/><path d="M85.500 552l-1.500 10" stroke="#d02020"/><path d="M88 553l-3 9" stroke="#e07020"/><path d="M89.500 554l-4 9" stroke="#2060c0"/></g>
<path d="M76 560h13l-1.500 13h-10z" fill="#b4b4b8"/><path d="M78 561l1 11M81 561v11M84 561l-.5 11M87 561l-1 11" stroke="#8a8a90" stroke-width=".5"/>
<path d="M88 556l12-7 7 3v24l-10 5-18-7z" fill="#deded6"/><path d="M100 549l7 3-1 6-9-2z" fill="#f0f0ec"/><path d="M89 559l14 4v6l-15-4z" fill="#2c3434"/><path d="M86 568l13 5-1 7-14-5z" fill="#c8c8c0"/><g fill="#787880"><rect x="87" y="569.500" width="2" height="1.300"/><rect x="90" y="570.700" width="2" height="1.300"/><rect x="93" y="571.900" width="2" height="1.300"/><rect x="86.500" y="572" width="2" height="1.300"/><rect x="89.500" y="573.200" width="2" height="1.300"/><rect x="92.500" y="574.400" width="2" height="1.300"/><rect x="96" y="573" width="2" height="1.300"/></g><rect x="94.500" y="570" width="2.500" height="1.500" fill="#30b090"/>
<path d="M46 577l10-7M49 578l10-6M52 578l9-5" stroke="#2050c0" stroke-width="1.100"/><path d="M47 575l8-6" stroke="#222" stroke-width="1.100"/><path d="M54 578l10-4M57 579l10-3" stroke="#d02020" stroke-width="1"/><path d="M45 572l9-5" stroke="#30a040" stroke-width=".9"/><path d="M48 571l7-4" stroke="#e0a020" stroke-width=".9"/>
<path d="M68 569l10 2-1 3-10-2z" fill="#e02828"/><path d="M67.500 571.500l10 2-.8 2.500-10-2z" fill="#282828"/><path d="M67 574l10 2-.7 2.300-10-2z" fill="#20b060"/><path d="M66.500 576.300l10 2-.6 2-10-2z" fill="#30a0e0"/><path d="M66 578.300l10 2-.5 1.500-10-2z" fill="#f0e020"/></svg>
<svg class="abs" style="left:395px;top:289px" width="55" height="49" viewBox="395 289 55 49"><rect x="395" y="290" width="54" height="47" fill="#f2f2f2"/><circle cx="422.300" cy="313.300" r="21" fill="#24508c"/>
<g fill="#fff"><path d="M423 300.500l3.200-2.200 9.300 8-3.200 3.600 z" transform="rotate(0)"/><path d="M421.800 302.200l10 9.200-2.200 2.200-9.800-9.200z" fill="#24508c"/><path d="M420.200 303.300l10.300 9.600-3.200 3-9.800-9.300z"/><path d="M423.500 311l2.300 2.300-13 10.500c-1.300 1-3-.7-2-2z"/><path d="M419.500 323h12.500l1.500 3.500h-15.500z"/></g></svg>
<svg class="abs" style="left:395px;top:349px" width="56" height="54" viewBox="395 349 56 54"><path d="M397.500 352.500h6.500c2 0 3 1 3.500 3l5.500 22-3 6.500 1 2.500h34" fill="none" stroke="#4e4e52" stroke-width="3.300" stroke-linecap="round" stroke-linejoin="round"/>
<path d="M411 359h36.500l-3.500 24h-27z" fill="#8aa4ea"/><path d="M411 359h36.500l-.6 4h-35z" fill="#a9bcf4"/>
<g fill="#dfe6fb"><rect x="417" y="364" width="3.200" height="13" rx="1"/><rect x="424" y="364" width="3.200" height="13" rx="1"/><rect x="431" y="364" width="3.200" height="13" rx="1"/><rect x="438" y="364" width="3.200" height="12" rx="1"/></g>
<circle cx="414" cy="395.500" r="5" fill="#8aa4ea"/><circle cx="414" cy="395.500" r="2.200" fill="#6d88d8"/><circle cx="440" cy="395.500" r="5" fill="#8aa4ea"/><circle cx="440" cy="395.500" r="2.200" fill="#6d88d8"/></svg>
<svg class="abs" style="left:395px;top:417px" width="55" height="45" viewBox="28 521 79 63" preserveAspectRatio="none"><rect x="28" y="519" width="79" height="65" fill="#fff"/><path d="M68 530l8-7h17v9l9-3v20H68z" fill="#a87848"/><path d="M83 529l19-3-2 6-10 2z" fill="#c49a68"/><path d="M83 531h8v18h-8z" fill="#b88858"/><path d="M76 523v14" stroke="#8a6038" stroke-width=".6"/>
<ellipse cx="92.500" cy="545" rx="4" ry="5" fill="#ecd6c0"/><ellipse cx="99.500" cy="543" rx="3.500" ry="5" fill="#f0e0d0"/><ellipse cx="98" cy="551" rx="4" ry="3" fill="#ecd6c0"/>
<ellipse cx="76" cy="545" rx="4" ry="5" fill="#8a8070"/><ellipse cx="74.500" cy="543.500" rx="1.500" ry="2" fill="#e0dccc"/>
<rect x="28" y="536" width="11" height="14" fill="#d01828"/><rect x="29.500" y="539" width="3" height="7" fill="#e8e0f0"/><rect x="34.500" y="539" width="3" height="7" fill="#a8d8f0"/>
<rect x="38" y="536.500" width="11" height="28.500" fill="#a8d022"/><path d="M45 537v28" stroke="#88b010" stroke-width=".7"/>
<path d="M48 529l9-2 4 1v24l-12 2z" fill="#f5b818"/><path d="M48 529l9-2 4 1-9 2z" fill="#282828"/><rect x="50" y="538" width="6" height="12" fill="#fff6e0"/><path d="M57 530v18" stroke="#2a2a2a" stroke-width="1.200"/>
<path d="M63 527l7-2 2 2-9 24-4-2z" fill="#1a62c4"/><path d="M60.500 535l4 1.500-3 7-3.500-2z" fill="#202020"/>
<path d="M51 558l14-19 3.500 2-13 20z" fill="#f4e020"/><path d="M55 561l13-20 3 1.500-12 21z" fill="#f47a20"/><path d="M62 551l7-11 3.500 2-7 11z" fill="#3a90e0"/>
<rect x="28" y="554" width="11" height="8" fill="#d01828"/><path d="M29 556l8 4" stroke="#fff" stroke-width="1.200"/>
<rect x="39" y="552" width="3.500" height="13" fill="#d82020"/><rect x="43" y="551" width="3.500" height="14" fill="#d82020"/><rect x="47" y="552" width="3.500" height="13" fill="#d82020"/><rect x="43.500" y="557" width="2.500" height="3" fill="#fff"/><rect x="39.500" y="558" width="2.500" height="3" fill="#222"/>
<rect x="29" y="563" width="3.500" height="11" fill="#eeeef4"/><rect x="33" y="563" width="3.500" height="11" fill="#eeeef4"/><rect x="29" y="567" width="3.500" height="5" fill="#2040a0"/><rect x="33" y="567" width="3.500" height="5" fill="#2040a0"/><rect x="37" y="568" width="2.500" height="6" fill="#222"/>
<path d="M38 572l17-12 3 3-17 13z" fill="#283880"/><path d="M41 573l14-10" stroke="#8090d0" stroke-width=".8"/>
<g stroke-width="1.300"><path d="M59 553v14" stroke="#d020a0"/><path d="M60.600 553v14" stroke="#8030c0"/><path d="M62.200 553v14" stroke="#f0c020"/><path d="M63.800 553v14" stroke="#f08020"/><path d="M65.400 553v14" stroke="#222"/><path d="M67 553v14" stroke="#30b040"/><path d="M68.600 553v14" stroke="#8030c0"/><path d="M70.200 553v14" stroke="#f040a0"/><path d="M71.800 553v14" stroke="#f0c020"/><path d="M73.400 553v14" stroke="#d020a0"/></g>
<rect x="58" y="562" width="17" height="7" fill="#e8c8f0" opacity=".8"/><rect x="60" y="563" width="4" height="5" fill="#60e060"/><rect x="65" y="563" width="4" height="5" fill="#f060d0"/><rect x="70" y="563" width="4" height="5" fill="#60c0f0"/>
<g stroke-width="1.100"><path d="M76 553l3 9" stroke="#208030"/><path d="M78 552l2.500 10" stroke="#f0c020"/><path d="M80.500 552l1 10" stroke="#d02020"/><path d="M83 552l-.5 10" stroke="#2040c0"/><path d="M85.500 552l-1.500 10" stroke="#d02020"/><path d="M88 553l-3 9" stroke="#e07020"/><path d="M89.500 554l-4 9" stroke="#2060c0"/></g>
<path d="M76 560h13l-1.500 13h-10z" fill="#b4b4b8"/><path d="M78 561l1 11M81 561v11M84 561l-.5 11M87 561l-1 11" stroke="#8a8a90" stroke-width=".5"/>
<path d="M88 556l12-7 7 3v24l-10 5-18-7z" fill="#deded6"/><path d="M100 549l7 3-1 6-9-2z" fill="#f0f0ec"/><path d="M89 559l14 4v6l-15-4z" fill="#2c3434"/><path d="M86 568l13 5-1 7-14-5z" fill="#c8c8c0"/><g fill="#787880"><rect x="87" y="569.500" width="2" height="1.300"/><rect x="90" y="570.700" width="2" height="1.300"/><rect x="93" y="571.900" width="2" height="1.300"/><rect x="86.500" y="572" width="2" height="1.300"/><rect x="89.500" y="573.200" width="2" height="1.300"/><rect x="92.500" y="574.400" width="2" height="1.300"/><rect x="96" y="573" width="2" height="1.300"/></g><rect x="94.500" y="570" width="2.500" height="1.500" fill="#30b090"/>
<path d="M46 577l10-7M49 578l10-6M52 578l9-5" stroke="#2050c0" stroke-width="1.100"/><path d="M47 575l8-6" stroke="#222" stroke-width="1.100"/><path d="M54 578l10-4M57 579l10-3" stroke="#d02020" stroke-width="1"/><path d="M45 572l9-5" stroke="#30a040" stroke-width=".9"/><path d="M48 571l7-4" stroke="#e0a020" stroke-width=".9"/>
<path d="M68 569l10 2-1 3-10-2z" fill="#e02828"/><path d="M67.500 571.500l10 2-.8 2.500-10-2z" fill="#282828"/><path d="M67 574l10 2-.7 2.300-10-2z" fill="#20b060"/><path d="M66.500 576.300l10 2-.6 2-10-2z" fill="#30a0e0"/><path d="M66 578.300l10 2-.5 1.500-10-2z" fill="#f0e020"/></svg>
<svg class="abs" style="left:395px;top:553px" width="55" height="24" viewBox="395 553 55 24"><rect x="395" y="553" width="55" height="24" fill="#fff"/>
<path d="M402 562.500l2-4.500 3.500-.5 1 5z" fill="#4a90d0"/><path d="M405 555.500h3l-1 3h-1.500z" fill="#8898a8"/><path d="M401 563l8-.5" stroke="#6a7a8a" stroke-width=".7"/>
<rect x="396.500" y="554" width="2" height="1.200" fill="#222"/><rect x="396.300" y="560.500" width="2.200" height="1" fill="#222"/><path d="M398 556l-1 4" stroke="#8ab0d0" stroke-width=".6"/>
<rect x="399" y="567.500" width="4" height="6.500" fill="#8890a0"/><path d="M397 575h8" stroke="#707888" stroke-width=".8"/>
<rect x="413" y="555" width="8.500" height="2.500" rx="1" fill="#b8d8f0"/><rect x="414" y="555.600" width="3" height="1.200" fill="#2060c0"/><rect x="417.500" y="555.600" width="3" height="1" fill="#d8c840"/>
<path d="M414.500 558v9" stroke="#303038" stroke-width="1"/><path d="M408.500 565.500h6l-1 4h-4z" fill="none" stroke="#202028" stroke-width="1"/><path d="M409 572l7-6M411 574.500l5-4" stroke="#202028" stroke-width="1.200"/><circle cx="412.500" cy="576" r=".8" fill="#222"/>
<path d="M419.500 559.500l4-2.500 2 1.500-4.500 3z" fill="#5a88d0"/><circle cx="420.500" cy="558.700" r=".8" fill="#222"/>
<circle cx="421.500" cy="566.600" r="3.400" fill="#c8203c"/><path d="M421.500 564v3" stroke="#fff" stroke-width=".8"/><rect x="420" y="572.500" width="5" height="4" fill="#4060b0"/><rect x="420.500" y="571" width="3.500" height="1" fill="#30a060"/>
<path d="M428.500 556l1 3h3l1.500-3 .5 5v13.500h-6.500z" fill="#d6dce0"/><circle cx="430.500" cy="561" r=".7" fill="#222"/><circle cx="432.500" cy="561" r=".7" fill="#222"/><path d="M434.500 567c1.500 0 2 1 2 2.500" stroke="#d6dce0" stroke-width="1.200" fill="none"/>
<rect x="437.500" y="560.300" width="5" height="2.800" fill="#1a2848"/><path d="M438 556.500l3-1 1 1.500-4 1z" fill="#3a70c0"/><rect x="442.500" y="555" width="1" height="12" fill="#c8d0e0"/><rect x="443" y="558" width="2" height="1" fill="#a0a8b8"/>
<circle cx="443.500" cy="564.500" r=".7" fill="#222"/><circle cx="444.500" cy="572.500" r=".8" fill="#222"/><circle cx="440.500" cy="576" r=".7" fill="#222"/><path d="M440 571v3" stroke="#c04040" stroke-width="1"/><path d="M448.500 565l.8 4" stroke="#8890a0" stroke-width=".8"/><path d="M447.500 574l1 2" stroke="#6060a0" stroke-width=".8"/></svg>

<!--BOTTOM-->
<div class="vb" style="left:412px;top:673px">Workflow</div>
<div class="abs" style="left:476px;top:669px;width:189px;height:20px;background:#fff;border:1px solid #adadad"></div>
<div class="vb" style="left:480px;top:673px;letter-spacing:-0.13px">Administration Depepart...</div>
<svg class="abs" style="left:654px;top:677px" width="7" height="4" viewBox="0 0 7 4"><path d="M0 0h7L3.500 4z" fill="#777"/></svg>
<div class="vb" style="left:679px;top:673px;letter-spacing:-0.1px">Distribution Code</div>
<div class="abs" style="left:792px;top:669px;width:143px;height:20px;background:#add8e6;border:1px solid #adadad"></div>
<svg class="abs" style="left:924px;top:677px" width="7" height="4" viewBox="0 0 7 4"><path d="M0 0h7L3.500 4z" fill="#777"/></svg>
<div class="btn" style="left:944px;width:133px"></div>
<div class="abs" style="left:981px;top:673px;white-space:nowrap;color:#333;letter-spacing:-0.4px">Create Document</div>
<div class="btn" style="left:1081px;width:83px"></div>
<div class="abs" style="left:1124px;top:673px;white-space:nowrap;color:#333">Print</div>
<svg class="abs" style="left:949px;top:666px" width="24" height="26" viewBox="949 666 24 26"><path d="M950.900 667.600h10.500l5.500 5.500v16.900h-16z" fill="#fcfcfc" stroke="#c4c4c4" stroke-width=".8"/><path d="M961.400 667.600v5.500h5.500" fill="#eee" stroke="#c4c4c4" stroke-width=".8"/><path d="M953 672h7M953 674.500h11M953 677h11M953 679.500h9M953 682h6M953 684.500h6M953 687h5" stroke="#c8c8c8" stroke-width=".9"/><path d="M963.400 679.300h3.800v3.800h3.800v3.800h-3.800v3.800h-3.800v-3.800h-3.800v-3.800h3.800z" fill="#46b83c" stroke="#1c6e1c" stroke-width="1" stroke-linejoin="round"/></svg>
<svg class="abs" style="left:1083px;top:666px" width="26" height="26" viewBox="1083 666 26 26"><defs><linearGradient id="pg1" x1="0" y1="0" x2="1" y2="0"><stop offset="0" stop-color="#8e969c"/><stop offset="1" stop-color="#cfd2d4"/></linearGradient><linearGradient id="pg2" x1="0" y1="0" x2="0" y2="1"><stop offset="0" stop-color="#a4a8ac"/><stop offset="1" stop-color="#e2e2e2"/></linearGradient></defs>
<path d="M1086.300 671.500l8.500-4.500h11.500l1.700 2v11.600l-8.500 7.400-13.200-.5z" fill="#f4f4f4" stroke="#b4b8bc" stroke-width=".6" stroke-linejoin="round"/>
<path d="M1100 673.600l8-4.600v11.600l-8 7.400z" fill="url(#pg1)"/>
<path d="M1087.300 670.700l7.500-3.700h11.500l-6.800 4.200z" fill="#eceeef"/><path d="M1092 668.700h10M1090.500 669.700h10" stroke="#c4c8cc" stroke-width=".6"/>
<path d="M1088 671.300h9.700l-.2 3.300h-9.500z" fill="#5d6b78"/><rect x="1090" y="671.800" width="3" height="1.400" rx=".7" fill="#5fe03c"/>
<rect x="1088.600" y="675.500" width="8.600" height="7" fill="url(#pg2)"/>
<path d="M1084.200 686.200l5.800-3.700 7.700 1.900-4.200 6.400z" fill="#eef2f6" stroke="#5a6470" stroke-width=".7" stroke-linejoin="round"/>
</svg>
<!--STATUS-->
<div class="abs" style="left:1px;top:707px;width:1178px;height:2px;background:#f8f8f8"></div><div class="abs" style="left:1px;top:709px;width:1178px;height:1px;background:#d4d4d4"></div>
<div class="abs" style="left:9px;top:705px;width:276px;height:2px;background:#d2d0ba"></div><div class="abs" style="left:9px;top:707px;width:276px;height:2px;background:#fefbe0"></div><div class="abs" style="left:9px;top:709px;width:276px;height:1px;background:#dad8bf"></div><div class="abs" style="left:9px;top:710px;width:276px;height:6px;background:#f7f5dc"></div>
<div class="st" style="left:30px">CPU\User - DESKTOP-1QSHPDJ\Anna Belle Martin</div>
<div class="ss" style="left:276px"></div>
<div class="st" style="left:308px">Organization -2137 | NPS10005 - NPS Training Organization, Version: 2022.001.1</div>
<div class="ss" style="left:709px"></div>
<div class="st" style="left:741px">MIP Database Server - DESKTOP-1QSHPDJ</div>
<div class="ss" style="left:957px"></div>
<div class="st" style="left:988px">S/M Expire Date - 10/06/2023</div>
<svg class="abs" style="left:1163px;top:716px" width="12" height="12" viewBox="0 0 12 12" fill="#b0b0b0"><rect x="9" y="1" width="2" height="2"/><rect x="5" y="5" width="2" height="2"/><rect x="9" y="5" width="2" height="2"/><rect x="1" y="9" width="2" height="2"/><rect x="5" y="9" width="2" height="2"/><rect x="9" y="9" width="2" height="2"/></svg>
<svg class="abs" style="left:8px;top:710px" width="18" height="19" viewBox="8 710 18 19"><path d="M12.600 719.500v-3c0-2.700 1.500-4.300 3.700-4.300s3.700 1.600 3.700 4.300v3" fill="#fff" stroke="#2f6eb5" stroke-width="1"/><path d="M12.400 716c.4-2.600 1.800-4 3.900-4s3.500 1.400 3.900 4z" fill="#2f6eb5"/><rect x="11.800" y="716.500" width="1.600" height="3" fill="#2f6eb5"/><rect x="19.300" y="716.500" width="1.600" height="3" fill="#2f6eb5"/><path d="M9.300 726.700c0-3.400 1.700-5.600 4.500-5.900l2.500 1.700 1.200-.9v5.100z" fill="#fff" stroke="#2f6eb5" stroke-width="1" stroke-linejoin="round"/><path d="M12.700 723v2M11.700 724h2" stroke="#2f6eb5" stroke-width=".6"/><rect x="17" y="721" width="8" height="7" fill="#fff"/><path d="M17 721.500h8" stroke="#2f6eb5" stroke-width="1"/><path d="M17.500 722v5.500M22.300 722v5.500" stroke="#666" stroke-width=".9"/></svg>
<svg class="abs" style="left:289px;top:711px" width="14" height="18" viewBox="289 711 14 18"><rect x="291.100" y="712.900" width="9.800" height="14" fill="#3b77b7"/><rect x="290.100" y="726.900" width="11.800" height="1" fill="#3b77b7"/><rect x="292.1" y="714.1" width="1.8" height="1.7" fill="#fff"/><rect x="292.1" y="717" width="1.8" height="1" fill="#fff"/><rect x="292.1" y="719.2" width="1.8" height="1.7" fill="#fff"/><rect x="292.1" y="722.1" width="1.8" height="0.8" fill="#fff"/><rect x="295.2" y="714.1" width="1.7" height="1.7" fill="#fff"/><rect x="295.2" y="717" width="1.7" height="1" fill="#fff"/><rect x="295.2" y="719.2" width="1.7" height="1.7" fill="#fff"/><rect x="295.2" y="722.1" width="1.7" height="0.8" fill="#fff"/><rect x="298.2" y="714.1" width="1.8" height="1.7" fill="#fff"/><rect x="298.2" y="717" width="1.8" height="1" fill="#fff"/><rect x="298.2" y="719.2" width="1.8" height="1.7" fill="#fff"/><rect x="298.2" y="722.1" width="1.8" height="0.8" fill="#fff"/><rect x="294.100" y="725.100" width="2.800" height="1.800" fill="#fff"/></svg>
<svg class="abs" style="left:720px;top:711px" width="18" height="18" viewBox="720 711 18 18"><path d="M722 715v10c0 1.100 2.500 2 5.500 2s5.500-.9 5.500-2v-10z" fill="#e8b25a"/><ellipse cx="727.500" cy="714.800" rx="5.500" ry="1.900" fill="#edbd6c"/><path d="M722.500 716.200c1 .8 3 1.200 5 1.200" stroke="#f6dcae" stroke-width=".7" fill="none"/><circle cx="732.500" cy="724.400" r="4.300" fill="#f0f0f0"/><g stroke="#444" stroke-width="1.300"><path d="M732.500 720.800v7.200M728.900 724.400h7.200M730 721.900l5 5M735 721.900l-5 5"/></g><circle cx="732.500" cy="724.400" r="2.300" fill="#444"/><circle cx="732.500" cy="724.400" r="1" fill="#e8b25a"/></svg>
<svg class="abs" style="left:966px;top:711px" width="20" height="18" viewBox="966 711 20 18"><g stroke="#2f6eb5" stroke-width="1.5"><path d="M968.00 716.00L975.80 716.00"/><path d="M969.14 713.24L974.66 718.76"/><path d="M971.90 712.10L971.90 719.90"/><path d="M974.66 713.24L969.14 718.76"/></g><circle cx="971.9" cy="716" r="2.65" fill="#2f6eb5"/><circle cx="971.9" cy="716" r="1.17" fill="#fff"/><g stroke="#666" stroke-width="1.3"><path d="M972.90 722.30L984.10 722.30"/><path d="M973.65 719.50L983.35 725.10"/><path d="M975.70 717.45L981.30 727.15"/><path d="M978.50 716.70L978.50 727.90"/><path d="M981.30 717.45L975.70 727.15"/><path d="M983.35 719.50L973.65 725.10"/></g><circle cx="978.5" cy="722.3" r="3.81" fill="#666"/><circle cx="978.5" cy="722.3" r="1.68" fill="#fff"/></svg>
<!--CALLOUTS-->
<div class="big" id="bigavail" style="left:620px;top:176px;font-size:31.500px">Available Items</div>
<svg class="abs" style="left:0;top:0" width="1180" height="732" viewBox="0 0 1180 732">
<defs><filter id="ds" x="-10%" y="-10%" width="125%" height="130%"><feGaussianBlur in="SourceAlpha" stdDeviation="2.500"/><feOffset dx="2" dy="3"/><feComponentTransfer><feFuncA type="linear" slope=".5"/></feComponentTransfer><feMerge><feMergeNode/><feMergeNode in="SourceGraphic"/></feMerge></filter></defs>
<g fill="#06ac8d" filter="url(#ds)"><rect x="590" y="273" width="152" height="99" rx="38" ry="41"/><path d="M579 273L613 281 594 300z"/></g>
<g fill="#06aa7c" filter="url(#ds)"><rect x="91" y="418" width="185" height="80" rx="34" ry="38"/><path d="M249 397L216 420 237 420z"/></g>
<g fill="#06ac8d" filter="url(#ds)"><rect x="374" y="466" width="318" height="71" rx="32" ry="33"/><path d="M354 551L377 514 398 536z"/></g>
<g fill="#06aa7c" filter="url(#ds)"><rect x="81" y="606" width="159" height="99" rx="44" ry="44"/><path d="M161.500 581L141 608 159.500 608z"/></g>
<g fill="#06ac8d" filter="url(#ds)"><rect x="726.500" y="520" width="174.500" height="129.500" rx="62" ry="58"/><path d="M812 676L806 646 835 642z"/></g>
<g fill="#06ac8d" filter="url(#ds)"><rect x="911" y="496.500" width="236.500" height="161" rx="70" ry="64"/><path d="M1069 682L1035 653 1063 650z"/></g>
</svg>
<div class="ct" style="left:665px;top:289px">1. Filter to<br>find a<br>specific item</div>
<div class="ct" style="left:182px;top:436px;color:#fdfbe0">Delete from cart<br>if applicable</div>
<div class="ct" style="left:532px;top:480px">2. Enter quantity and click the<br>+ button to add to cart</div>
<div class="ct" style="left:159.500px;top:622.500px;color:#fdfbe0">Modify<br>quantity in cart<br>if applicable</div>
<div class="ct" style="left:813px;top:540.500px">3. Select<br>distribution<br>code or "N/A" if<br>not avaiable</div>
<div class="ct" style="left:1028px;top:521px;white-space:pre">4. Create  purchase<br>request and<br>review/change before<br>submitting for<br>approval</div>
</div>
</body>
</html>
